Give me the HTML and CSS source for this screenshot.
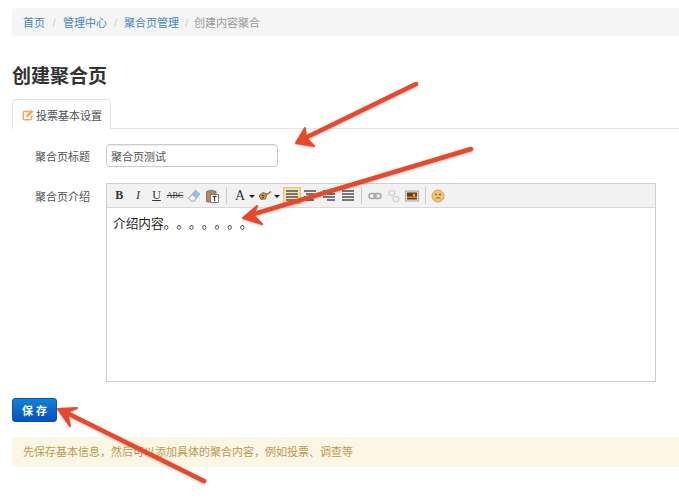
FILE: index.html
```html
<!doctype html>
<html lang="zh-CN">
<head>
	<meta charset="utf-8">
	<title>创建聚合页</title>
	<link rel="stylesheet" href="styles.css">
</head>
<body>
	<ul class="breadcrumb">
		<li><a href="#">首页</a><span class="divider">/</span></li>
		<li><a href="#">管理中心</a><span class="divider mid">/</span></li>
		<li><a href="#">聚合页管理</a><span class="divider narrow">/</span></li>
		<li class="active">创建内容聚合</li>
	</ul>

	<h1>创建聚合页</h1>

	<div class="tabs">
		<a class="tab" href="#">
			<svg class="tab-icon" width="12" height="12" viewBox="0 0 12 12">
				<path d="M8 2.4H2.6a1.4 1.4 0 0 0-1.4 1.4v5.6a1.4 1.4 0 0 0 1.4 1.4h5.6a1.4 1.4 0 0 0 1.4-1.4V6.6" fill="none" stroke="#f6a95a" stroke-width="1.5"/>
				<path d="M4.4 5.9 9.5.8l1.9 1.9-5.1 5.1-2.4.5z" fill="#f6a95a"/>
			</svg>
			投票基本设置
		</a>
	</div>

	<div class="row first">
		<label class="row-label">聚合页标题</label>
		<input class="text-input" type="text" value="聚合页测试">
	</div>

	<div class="row">
		<label class="row-label label-editor">聚合页介绍</label>
		<div class="editor">
			<div class="toolbar">
				<div class="tool-group">
					<span class="tool glyph bold">B</span>
					<span class="tool glyph italic">I</span>
					<span class="tool glyph under">U</span>
					<span class="tool glyph strike">ABC</span>
					<span class="tool">
						<svg width="14" height="14" viewBox="0 0 14 14">
							<path d="M8.6 1.2 12.8 5 7.4 12H4.2L1.6 9.4z" fill="#8fc3ea" stroke="#8aa0b2" stroke-width=".7"/>
							<path d="M1.6 9.4 5 5.4 9.2 9 7.4 12H4.2z" fill="#f4f4f4" stroke="#9a9a9a" stroke-width=".7"/>
						</svg>
					</span>
					<span class="tool">
						<svg width="14" height="14" viewBox="0 0 14 14">
							<rect x="1.5" y="2" width="9.5" height="11" rx="1" fill="#b8895a" stroke="#7d5f42" stroke-width=".8"/>
							<rect x="4" y=".8" width="4.5" height="2.6" fill="#8a8a8a"/>
							<rect x="5.5" y="5.5" width="8" height="8" fill="#fff" stroke="#667" stroke-width=".8"/>
							<path d="M7.5 7.5h4M9.5 7.5v4.4" stroke="#334" stroke-width="1.2" fill="none"/>
						</svg>
					</span>
				</div>
				<div class="tool-group">
					<span class="tool glyph letter">A</span><span class="caret"></span>
					<span class="tool marker">
						<svg width="14" height="14" viewBox="0 0 14 14">
							<path d="M1 6.5 5 3.5l4 1.5-1.5 5L3 10.5z" fill="#c8a040" stroke="#6e5a28" stroke-width=".8"/>
							<path d="M3.5 6.5h3M3.5 8.5h2.5" stroke="#5a3a20" stroke-width="1"/>
							<path d="M9 5.5 13 2.5" stroke="#d0443a" stroke-width="1.3"/>
						</svg>
					</span><span class="caret"></span>
					<span class="tool lines active"><i></i><i class="short"></i><i></i><i class="short"></i></span>
					<span class="tool lines center"><i></i><i class="short"></i><i></i><i class="short"></i></span>
					<span class="tool lines right"><i></i><i class="short"></i><i></i><i class="short"></i></span>
					<span class="tool lines"><i></i><i></i><i></i><i></i></span>
				</div>
				<div class="tool-group tight">
					<span class="tool">
						<svg width="14" height="14" viewBox="0 0 14 14">
							<rect x="1" y="4.5" width="7" height="5" rx="2.5" fill="none" stroke="#a6a6a6" stroke-width="1.5"/>
							<rect x="6" y="4.5" width="7" height="5" rx="2.5" fill="none" stroke="#a6a6a6" stroke-width="1.5"/>
						</svg>
					</span>
					<span class="tool">
						<svg width="14" height="14" viewBox="0 0 14 14">
							<rect x="2" y="1.5" width="6" height="5" rx="2.5" fill="none" stroke="#d6d6d6" stroke-width="1.5"/>
							<rect x="6" y="7.5" width="6" height="5" rx="2.5" fill="none" stroke="#d6d6d6" stroke-width="1.5"/>
						</svg>
					</span>
					<span class="tool">
						<svg width="14" height="14" viewBox="0 0 14 14">
							<rect x=".5" y="2" width="13" height="10" fill="#ddd" stroke="#aaa"/>
							<rect x="2" y="3.5" width="10" height="7" fill="#6b3a12"/>
							<path d="M2 7.5h10v1.5H2z" fill="#e08a22"/>
							<circle cx="9" cy="6" r="1.3" fill="#f0b040"/>
						</svg>
					</span>
				</div>
				<div class="tool-group">
					<span class="tool">
						<svg width="14" height="14" viewBox="0 0 14 14">
							<circle cx="7" cy="7" r="6" fill="#f3c67c" stroke="#d9a04a"/>
							<circle cx="5" cy="5.5" r="1" fill="#8a6a30"/>
							<circle cx="9" cy="5.5" r="1" fill="#8a6a30"/>
							<path d="M4.5 9.6c1.5-1.2 3.5-1.2 5 0" fill="none" stroke="#8a6a30"/>
						</svg>
					</span>
				</div>
			</div>
			<div class="editor-body">介绍内容。。。。。。。</div>
		</div>
	</div>

	<button class="btn-save" type="button">保 存</button>

	<div class="alert">先保存基本信息，然后可以添加具体的聚合内容，例如投票、调查等</div>

	<!-- red arrows on top of the form -->
	<svg class="arrows" width="679" height="500" viewBox="0 0 679 500">
		<g fill="#e9482c" stroke="#e9482c" stroke-linejoin="round" stroke-linecap="round">
			<path d="M416 84 303 139" stroke-width="4.5" fill="none"/>
			<path d="M296 143 305 128 306 138 314 146z" stroke-width="2"/>
			<path d="M471 149 250 215" stroke-width="4.5" fill="none"/>
			<path d="M243 218 257 206 253 215 262 224z" stroke-width="2"/>
			<path d="M204 481 65 412" stroke-width="4.5" fill="none"/>
			<path d="M58 409 77 408 67 412 70 426z" stroke-width="2"/>
		</g>
	</svg>
</body>
</html>
```

FILE: styles.css
```css
body
{
	margin: 0;
	padding: 8px 0 0 12px;
	height: 500px;
	box-sizing: border-box;
	overflow: hidden;
	color: #555;
	background-color: #fff;
	font-family: "Liberation Sans", "Noto Sans CJK SC", sans-serif;
	font-size: 11px;
	text-spacing-trim: space-all;
}

a
{
	text-decoration: none;
}

.breadcrumb
{
	display: flex;
	align-items: center;
	height: 28px;
	margin: 0;
	padding: 0 0 0 11px;
	list-style: none;
	background-color: #f5f5f5;
	border-radius: 4px 0 0 4px;
}

.breadcrumb a
{
	color: #3f88c5;
}

.breadcrumb .divider
{
	display: inline-block;
	width: 18px;
	text-align: center;
	color: #ccc;
}

.breadcrumb .divider.mid
{
	width: 17px;
}

.breadcrumb .divider.narrow
{
	width: 15px;
}

.breadcrumb .active
{
	color: #999;
}

h1
{
	margin: 27px 0 8px;
	font-size: 19px;
	line-height: 28px;
	font-weight: bold;
	color: #333;
}

.tabs
{
	display: flex;
	height: 29px;
	border-bottom: 1px solid #e4e4e4;
}

.tab
{
	display: flex;
	align-items: center;
	gap: 2px;
	width: 99px;
	height: 30px;
	box-sizing: border-box;
	padding-left: 9px;
	color: #555;
	background-color: #fff;
	border: 1px solid #e4e4e4;
	border-bottom: 0;
	border-radius: 4px 4px 0 0;
}

.row
{
	display: flex;
	margin-top: 16px;
}

.row.first
{
	margin-top: 15px;
	align-items: center;
}

.row-label
{
	width: 94px;
	box-sizing: border-box;
	padding-left: 23px;
	color: #555;
}

.label-editor
{
	padding-top: 5px;
}

.text-input
{
	width: 172px;
	height: 23px;
	box-sizing: border-box;
	margin: 0;
	padding: 0 4px;
	color: #555;
	font-family: inherit;
	font-size: 11px;
	border: 1px solid #ccc;
	border-radius: 4px;
	box-shadow: inset 0 1px 1px rgba(0, 0, 0, 0.07);
}

.editor
{
	width: 550px;
	height: 199px;
	box-sizing: border-box;
	border: 1px solid #d0d0d0;
	background-color: #fff;
}

.toolbar
{
	display: flex;
	align-items: center;
	height: 24px;
	box-sizing: border-box;
	padding-left: 3px;
	background-color: #f2f2f2;
	border-bottom: 1px solid #d8d8d8;
}

.tool-group
{
	display: flex;
	align-items: center;
	padding-right: 4px;
	margin-right: 4px;
	height: 17px;
	border-right: 1px solid #ccc;
}

.tool-group.tight
{
	padding-right: 3px;
	margin-right: 3px;
}

.tool-group:last-child
{
	border-right: 0;
}

.tool
{
	display: flex;
	align-items: center;
	justify-content: center;
	width: 18.6px;
	height: 17px;
	box-sizing: border-box;
	flex: none;
}

.glyph
{
	font-family: "Liberation Serif", serif;
	font-size: 12px;
	color: #333;
}

.bold
{
	font-weight: bold;
}

.italic
{
	font-style: italic;
}

.under
{
	text-decoration: underline;
}

.strike
{
	font-size: 8px;
	text-decoration: line-through;
}

.letter
{
	font-size: 14px;
	width: 15px;
	margin-left: 2px;
}

.marker
{
	width: 15px;
}

.caret
{
	width: 0;
	height: 0;
	margin: 1px 3px 0 1px;
	border-top: 3px solid #222;
	border-left: 3px solid transparent;
	border-right: 3px solid transparent;
}

.lines
{
	flex-direction: column;
	gap: 1px;
	align-items: center;
}

.lines i
{
	display: block;
	width: 12px;
	height: 2px;
	background-color: #777;
}

.lines .short
{
	width: 12px;
}

.lines.center .short
{
	width: 8px;
}

.lines.right
{
	align-items: flex-end;
	padding-right: 3px;
}

.lines.right .short
{
	width: 8px;
}

.lines.active
{
	background-color: #fbe0a6;
	border: 1px solid #e8c27a;
}

.editor-body
{
	padding: 6px 6px;
	font-size: 12.7px;
	line-height: 20px;
	color: #222;
}

.btn-save
{
	display: block;
	width: 45px;
	height: 24px;
	margin: 16px 0 15px;
	padding: 0;
	color: #fff;
	font-family: inherit;
	font-size: 11px;
	font-weight: bold;
	background: linear-gradient(#1582d2, #0450c4);
	border: 1px solid #0a55b0;
	border-radius: 3px;
}

.alert
{
	height: 30px;
	box-sizing: border-box;
	padding-left: 11px;
	line-height: 31px;
	color: #c09853;
	background-color: #fcf6e4;
	border-radius: 4px 0 0 4px;
}

.arrows
{
	position: absolute;
	top: 0;
	left: 0;
	filter: drop-shadow(0 1px 1px rgba(0, 0, 0, 0.25));
}
```
